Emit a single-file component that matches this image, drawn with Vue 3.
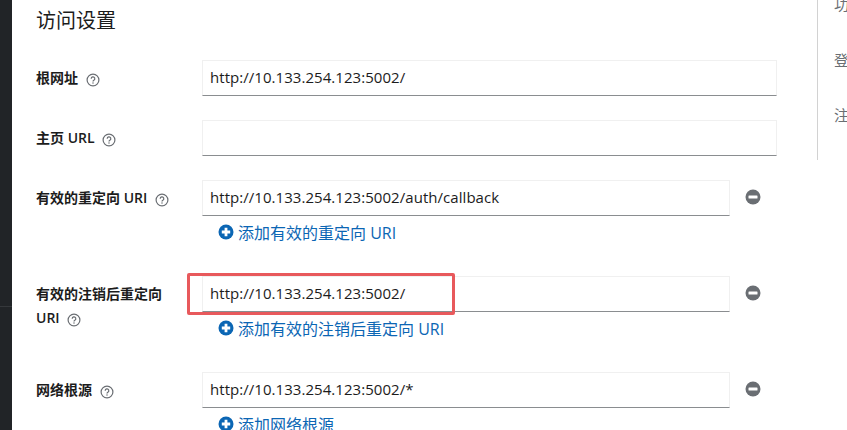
<script setup>
const rows = [
  { label: '根网址', value: 'http://10.133.254.123:5002/', wide: true },
  { label: '主页 URL', value: '', wide: true },
  { label: '有效的重定向 URI', value: 'http://10.133.254.123:5002/auth/callback', add: '添加有效的重定向 URI' },
  { label: '有效的注销后重定向 URI', value: 'http://10.133.254.123:5002/', add: '添加有效的注销后重定向 URI', marked: true },
  { label: '网络根源', value: 'http://10.133.254.123:5002/*', add: '添加网络根源' }
]
const jumpLinks = ['功能配置', '登录设置', '注销设置']
</script>

<template>
  <div class="page">
    <div class="sidebar"><div class="sidebar-line"></div></div>
    <main class="content">
      <h2 class="title">访问设置</h2>
      <div v-for="row in rows" :key="row.label" class="row">
        <label class="label">
          {{ row.label }}
          <svg class="help" viewBox="0 0 14 14">
            <circle cx="7" cy="7" r="5.9" fill="none" stroke="#6a6e73" stroke-width="1.2" />
            <path d="M5.2 5.7a1.8 1.8 0 1 1 2.7 1.5c-.6.4-.9.6-.9 1.2" fill="none" stroke="#6a6e73" stroke-width="1.2" />
            <circle cx="7" cy="10.1" r=".75" fill="#6a6e73" />
          </svg>
        </label>
        <div class="field">
          <div class="input-line">
            <div class="input" :class="{ wide: row.wide }">{{ row.value }}</div>
            <svg v-if="row.add" class="remove" viewBox="0 0 16 16">
              <circle cx="8" cy="8" r="7.5" fill="#6a6e73" />
              <rect x="3.5" y="6.5" width="9" height="3" rx=".6" fill="#fff" />
            </svg>
            <div v-if="row.marked" class="marker"></div>
          </div>
          <a v-if="row.add" class="add">
            <svg class="plus" viewBox="0 0 16 16">
              <circle cx="8" cy="8" r="7.5" fill="#0b66b4" />
              <path d="M8 3.8v8.4M3.8 8h8.4" stroke="#fff" stroke-width="2.8" />
            </svg>
            {{ row.add }}
          </a>
        </div>
      </div>
    </main>
    <aside class="jump">
      <div v-for="link in jumpLinks" :key="link" class="jump-link">{{ link }}</div>
    </aside>
  </div>
</template>

<style>
html, body {
  margin: 0;
  overflow: hidden;
  background: #fff;
}
</style>

<style scoped>
.page {
  display: flex;
  align-items: flex-start;
  width: 847px;
  height: 430px;
  overflow: hidden;
  background: #fff;
  color: #1c1c1c;
  font-family: "Open Sans", "Noto Sans CJK SC", sans-serif;
}

.sidebar {
  flex: none;
  width: 12px;
  height: 430px;
  padding-top: 306px;
  box-sizing: border-box;
  background: #212427;
}

.sidebar-line {
  height: 1px;
  background: #35383b;
}

.content {
  flex: none;
  width: 805px;
  padding-left: 24px;
  box-sizing: border-box;
}

.title {
  margin: 0;
  padding-top: 8px;
  height: 60px;
  box-sizing: border-box;
  font-size: 20px;
  font-weight: 400;
  line-height: 26px;
}

.row {
  display: flex;
  margin-bottom: 24px;
}

.label {
  flex: none;
  width: 166px;
  padding: 6px 16px 0 0;
  box-sizing: border-box;
  font-size: 14px;
  font-weight: 600;
  line-height: 24px;
}

.help {
  width: 14px;
  height: 14px;
  margin-left: 4px;
  vertical-align: -4px;
}

.field {
  flex: 1;
}

.input-line {
  position: relative;
  display: flex;
  align-items: center;
}

.input {
  width: 528px;
  height: 36px;
  box-sizing: border-box;
  padding-left: 7px;
  border: 1px solid #f0f0f0;
  border-bottom: 1px solid #8a8d90;
  font-size: 15px;
  letter-spacing: .05px;
  line-height: 32px;
}

.input.wide {
  width: 575px;
}

.remove {
  width: 16px;
  height: 16px;
  margin: 0 0 2px 15px;
}

.marker {
  position: absolute;
  left: -15px;
  top: -3px;
  width: 268px;
  height: 42px;
  box-sizing: border-box;
  border: 3px solid #e8595c;
  border-radius: 2px;
}

.add {
  display: flex;
  align-items: center;
  height: 32px;
  margin-bottom: 4px;
  padding-left: 16px;
  color: #0b66b4;
  font-size: 16px;
}

.plus {
  width: 16px;
  height: 16px;
  margin-right: 4px;
}

.jump {
  flex: none;
  width: 30px;
  height: 160px;
  padding-left: 16px;
  border-left: 1px solid #d2d2d2;
  box-sizing: border-box;
}

.jump-link {
  position: relative;
  top: -6px;
  height: 55.5px;
  font-size: 15px;
  line-height: 20px;
  color: #6a6e73;
  white-space: nowrap;
}
</style>
